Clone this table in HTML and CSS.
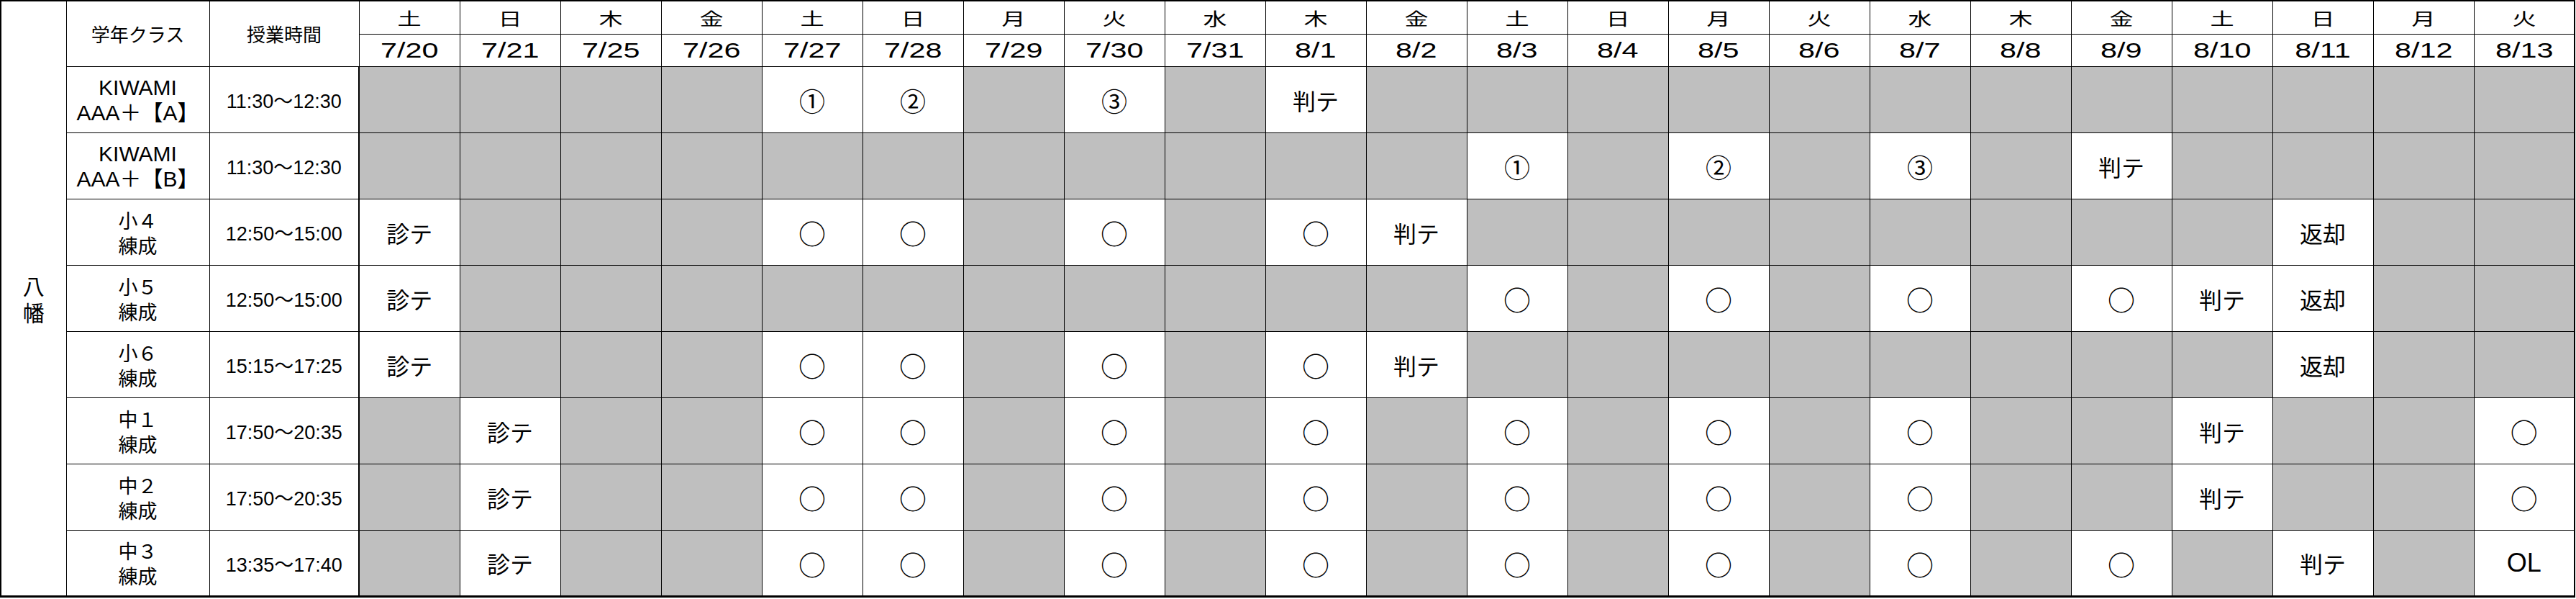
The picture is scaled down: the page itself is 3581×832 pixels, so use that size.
FILE: index.html
```html
<!DOCTYPE html>
<html lang="ja">
<head>
    <meta charset="UTF-8">
    <title>授業日程</title>
    <link rel="stylesheet" href="styles.css">
</head>
<body>
    <table class="sched">
        <colgroup>
            <col class="c-area">
            <col class="c-class">
            <col class="c-time">
        </colgroup>
        <tbody>
            <tr class="day-row">
                <td class="area" rowspan="10">八<br>幡</td>
                <th class="lbl" rowspan="2">学年クラス</th>
                <th class="lbl time-col" rowspan="2">授業時間</th>
                <th><span class="wide">土</span></th><th><span class="wide">日</span></th><th><span class="wide">木</span></th><th><span class="wide">金</span></th>
                <th><span class="wide">土</span></th><th><span class="wide">日</span></th><th><span class="wide">月</span></th><th><span class="wide">火</span></th>
                <th><span class="wide">水</span></th><th><span class="wide">木</span></th><th><span class="wide">金</span></th><th><span class="wide">土</span></th>
                <th><span class="wide">日</span></th><th><span class="wide">月</span></th><th><span class="wide">火</span></th><th><span class="wide">水</span></th>
                <th><span class="wide">木</span></th><th><span class="wide">金</span></th><th><span class="wide">土</span></th><th><span class="wide">日</span></th>
                <th><span class="wide">月</span></th><th><span class="wide">火</span></th>
            </tr>
            <tr class="date-row">
                <th><span class="wide">7/20</span></th><th><span class="wide">7/21</span></th><th><span class="wide">7/25</span></th><th><span class="wide">7/26</span></th>
                <th><span class="wide">7/27</span></th><th><span class="wide">7/28</span></th><th><span class="wide">7/29</span></th><th><span class="wide">7/30</span></th>
                <th><span class="wide">7/31</span></th><th><span class="wide">8/1</span></th><th><span class="wide">8/2</span></th><th><span class="wide">8/3</span></th>
                <th><span class="wide">8/4</span></th><th><span class="wide">8/5</span></th><th><span class="wide">8/6</span></th><th><span class="wide">8/7</span></th>
                <th><span class="wide">8/8</span></th><th><span class="wide">8/9</span></th><th><span class="wide">8/10</span></th><th><span class="wide">8/11</span></th>
                <th><span class="wide">8/12</span></th><th><span class="wide">8/13</span></th>
            </tr>
            <tr class="row">
                <td class="cls latin">KIWAMI<br>AAA＋【A】</td>
                <td class="time">11:30～12:30</td>
                <td class="g"></td><td class="g"></td><td class="g"></td><td class="g"></td>
                <td class="n">①</td><td class="n">②</td><td class="g"></td><td class="n">③</td>
                <td class="g"></td><td>判テ</td><td class="g"></td><td class="g"></td>
                <td class="g"></td><td class="g"></td><td class="g"></td><td class="g"></td>
                <td class="g"></td><td class="g"></td><td class="g"></td><td class="g"></td>
                <td class="g"></td><td class="g"></td>
            </tr>
            <tr class="row">
                <td class="cls latin">KIWAMI<br>AAA＋【B】</td>
                <td class="time">11:30～12:30</td>
                <td class="g"></td><td class="g"></td><td class="g"></td><td class="g"></td>
                <td class="g"></td><td class="g"></td><td class="g"></td><td class="g"></td>
                <td class="g"></td><td class="g"></td><td class="g"></td><td class="n">①</td>
                <td class="g"></td><td class="n">②</td><td class="g"></td><td class="n">③</td>
                <td class="g"></td><td>判テ</td><td class="g"></td><td class="g"></td>
                <td class="g"></td><td class="g"></td>
            </tr>
            <tr class="row">
                <td class="cls">小４<br>練成</td>
                <td class="time">12:50～15:00</td>
                <td>診テ</td><td class="g"></td><td class="g"></td><td class="g"></td>
                <td class="o">○</td><td class="o">○</td><td class="g"></td><td class="o">○</td>
                <td class="g"></td><td class="o">○</td><td>判テ</td><td class="g"></td>
                <td class="g"></td><td class="g"></td><td class="g"></td><td class="g"></td>
                <td class="g"></td><td class="g"></td><td class="g"></td><td>返却</td>
                <td class="g"></td><td class="g"></td>
            </tr>
            <tr class="row">
                <td class="cls">小５<br>練成</td>
                <td class="time">12:50～15:00</td>
                <td>診テ</td><td class="g"></td><td class="g"></td><td class="g"></td>
                <td class="g"></td><td class="g"></td><td class="g"></td><td class="g"></td>
                <td class="g"></td><td class="g"></td><td class="g"></td><td class="o">○</td>
                <td class="g"></td><td class="o">○</td><td class="g"></td><td class="o">○</td>
                <td class="g"></td><td class="o">○</td><td>判テ</td><td>返却</td>
                <td class="g"></td><td class="g"></td>
            </tr>
            <tr class="row">
                <td class="cls">小６<br>練成</td>
                <td class="time">15:15～17:25</td>
                <td>診テ</td><td class="g"></td><td class="g"></td><td class="g"></td>
                <td class="o">○</td><td class="o">○</td><td class="g"></td><td class="o">○</td>
                <td class="g"></td><td class="o">○</td><td>判テ</td><td class="g"></td>
                <td class="g"></td><td class="g"></td><td class="g"></td><td class="g"></td>
                <td class="g"></td><td class="g"></td><td class="g"></td><td>返却</td>
                <td class="g"></td><td class="g"></td>
            </tr>
            <tr class="row">
                <td class="cls">中１<br>練成</td>
                <td class="time">17:50～20:35</td>
                <td class="g"></td><td>診テ</td><td class="g"></td><td class="g"></td>
                <td class="o">○</td><td class="o">○</td><td class="g"></td><td class="o">○</td>
                <td class="g"></td><td class="o">○</td><td class="g"></td><td class="o">○</td>
                <td class="g"></td><td class="o">○</td><td class="g"></td><td class="o">○</td>
                <td class="g"></td><td class="g"></td><td>判テ</td><td class="g"></td>
                <td class="g"></td><td class="o">○</td>
            </tr>
            <tr class="row">
                <td class="cls">中２<br>練成</td>
                <td class="time">17:50～20:35</td>
                <td class="g"></td><td>診テ</td><td class="g"></td><td class="g"></td>
                <td class="o">○</td><td class="o">○</td><td class="g"></td><td class="o">○</td>
                <td class="g"></td><td class="o">○</td><td class="g"></td><td class="o">○</td>
                <td class="g"></td><td class="o">○</td><td class="g"></td><td class="o">○</td>
                <td class="g"></td><td class="g"></td><td>判テ</td><td class="g"></td>
                <td class="g"></td><td class="o">○</td>
            </tr>
            <tr class="row">
                <td class="cls">中３<br>練成</td>
                <td class="time">13:35～17:40</td>
                <td class="g"></td><td>診テ</td><td class="g"></td><td class="g"></td>
                <td class="o">○</td><td class="o">○</td><td class="g"></td><td class="o">○</td>
                <td class="g"></td><td class="o">○</td><td class="g"></td><td class="o">○</td>
                <td class="g"></td><td class="o">○</td><td class="g"></td><td class="o">○</td>
                <td class="g"></td><td class="o">○</td><td class="g"></td><td>判テ</td>
                <td class="g"></td><td class="ol">OL</td>
            </tr>
        </tbody>
    </table>
</body>
</html>
```

FILE: styles.css
```css
body {
    margin: 0;
    background: #fff;
    color: #000;
    font-family: "Liberation Sans", "Noto Sans CJK JP", sans-serif;
}
.sched {
    width: 3580px;
    table-layout: fixed;
    border-collapse: collapse;
    border: 2px solid #000;
    border-bottom-width: 3px;
}
.c-area { width: 91px; }
.c-class { width: 199px; }
.c-time { width: 208px; }
.sched th, .sched td {
    border: 1px solid #000;
    padding: 0;
    text-align: center;
    vertical-align: middle;
    font-weight: normal;
    overflow: hidden;
    white-space: nowrap;
}
.time-col, .sched .time {
    border-right: 2px solid #000;
}
.day-row th {
    height: 45px;
    font-family: "Noto Sans CJK JP", sans-serif;
    font-size: 24px;
    line-height: 1;
}
.date-row th {
    height: 44px;
    font-size: 30px;
    line-height: 1;
}
.wide {
    display: inline-block;
    transform: scaleX(1.38);
}
.sched .lbl {
    font-family: "Noto Sans CJK JP", sans-serif;
    font-size: 26px;
}
.sched .area {
    font-family: "Noto Sans CJK JP", sans-serif;
    font-size: 30px;
    line-height: 37px;
}
.row {
    height: 92px;
}
.row td {
    font-family: "Noto Sans CJK JP", sans-serif;
    font-size: 32px;
}
.sched .g {
    background: #bfbfbf;
}
.sched .o {
    font-size: 38px;
}
.sched .n {
    font-size: 36px;
}
.sched .cls {
    font-size: 27px;
    line-height: 35px;
}
.sched .cls.latin {
    font-family: "Liberation Sans", "Noto Sans CJK JP", sans-serif;
    font-size: 30px;
}
.sched .time {
    font-family: "Liberation Sans", "Noto Sans CJK JP", sans-serif;
    font-size: 27px;
}
.sched .ol {
    font-family: "Liberation Sans", sans-serif;
    font-size: 36px;
}
```
